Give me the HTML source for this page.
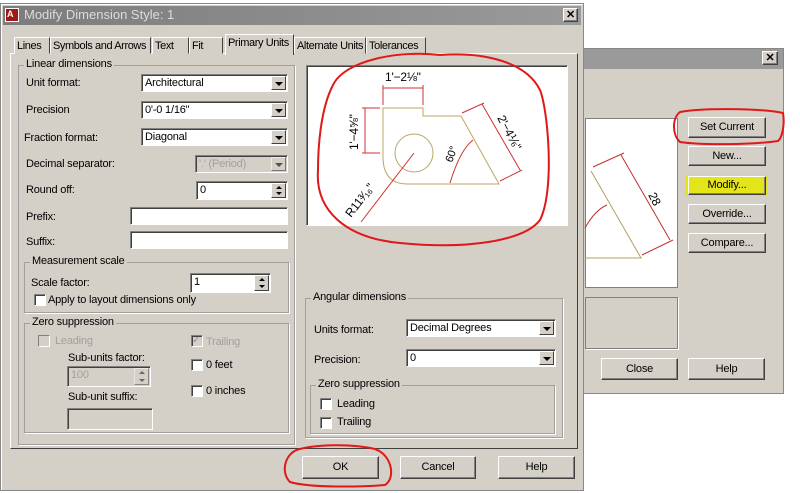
<!DOCTYPE html>
<html><head><meta charset="utf-8"><style>
*{box-sizing:border-box;margin:0;padding:0}
body{width:800px;height:493px;background:#fff;position:relative;overflow:hidden;font-family:"Liberation Sans",sans-serif;font-size:11px;color:#000;letter-spacing:-0.2px}
.a{position:absolute;white-space:nowrap}
.dlg{background:#d4d0c8;border:1px solid #888;box-shadow:inset 1px 1px 0 #fff}
.btn{position:absolute;background:#d4d0c8;border:1px solid;border-color:#fff #404040 #404040 #fff;box-shadow:inset -1px -1px 0 #808080;text-align:center;font-size:11px}
.grp{position:absolute;border:1px solid #a0a0a0;box-shadow:1px 1px 0 #fff}
.gl{position:absolute;top:-8px;left:5px;background:#d4d0c8;padding:0 2px;font-size:11px;white-space:nowrap}
.in{position:absolute;background:#fff;border:1px solid;border-color:#808080 #fff #fff #808080;box-shadow:inset 1px 1px 0 #404040;padding:2px 3px;font-size:11px;line-height:12px;white-space:nowrap}
.dd{position:absolute;right:1px;top:1px;bottom:1px;width:15px;background:#d4d0c8;border:1px solid;border-color:#fff #404040 #404040 #fff}
.dd:after{content:"";position:absolute;left:3px;top:5px;border-left:4px solid transparent;border-right:4px solid transparent;border-top:4px solid #000}
.sp{position:absolute;right:1px;top:1px;bottom:1px;width:15px;background:#d4d0c8;border:1px solid;border-color:#fff #404040 #404040 #fff}
.sp:before{content:"";position:absolute;left:4px;top:2px;border-left:3px solid transparent;border-right:3px solid transparent;border-bottom:3px solid #000}
.sp:after{content:"";position:absolute;left:4px;bottom:2px;border-left:3px solid transparent;border-right:3px solid transparent;border-top:3px solid #000}
.cb{position:absolute;width:12px;height:12px;background:#fff;border:1px solid;border-color:#808080 #fff #fff #808080;box-shadow:inset 1px 1px 0 #404040}
.tab{position:absolute;top:37px;height:17px;border:1px solid;border-color:#fff #404040 transparent #fff;padding:2px 2px;font-size:11px;background:#d4d0c8;white-space:nowrap;overflow:hidden;letter-spacing:-0.4px}
.dis{color:#a0a0a0}
</style></head><body>

<!-- back dialog -->
<div class="a dlg" style="left:575px;top:48px;width:209px;height:346px"></div>
<div class="a" style="left:576px;top:49px;width:207px;height:20px;background:#9a9a9a"></div>
<div class="btn" style="left:762px;top:51px;width:16px;height:14px;font-weight:bold;line-height:12px">✕</div>
<div class="a" style="left:585px;top:118px;width:93px;height:170px;background:#fff;border:1px solid #808080"></div>
<svg class="a" style="left:0;top:0" width="800" height="493">
<path d="M591 171 L641 258 L585 258" fill="none" stroke="#b0a060" stroke-width="1"/>
<path d="M593 167 L624 153 M642 255 L673 240 M621 155 L670 240" stroke="#c03030" fill="none"/>
<path d="M585 228 Q595 210 607 205" stroke="#c03030" fill="none"/>
<text x="648" y="195" font-size="12" transform="rotate(63 648 195)" font-family="Liberation Sans">28</text>
</svg>
<div class="btn" style="left:688px;top:117px;width:78px;height:21px;line-height:19px">Set Current</div>
<div class="btn" style="left:688px;top:146px;width:78px;height:20px;line-height:18px">New...</div>
<div class="a" style="left:685px;top:175px;width:82px;height:21px;background:#e4e41a"></div>
<div class="btn" style="left:688px;top:176px;width:78px;height:19px;line-height:17px;background:#e4e41a">Modify...</div>
<div class="btn" style="left:688px;top:204px;width:78px;height:20px;line-height:18px">Override...</div>
<div class="btn" style="left:688px;top:233px;width:78px;height:20px;line-height:18px">Compare...</div>
<div class="a" style="left:585px;top:297px;width:93px;height:52px;border:1px solid #808080;box-shadow:1px 1px 0 #fff"></div>
<div class="btn" style="left:601px;top:358px;width:77px;height:22px;line-height:20px">Close</div>
<div class="btn" style="left:688px;top:358px;width:77px;height:22px;line-height:20px">Help</div>

<!-- main dialog -->
<div class="a dlg" style="left:0;top:3px;width:584px;height:488px"></div>
<div class="a" style="left:3px;top:6px;width:578px;height:19px;background:linear-gradient(90deg,#7c7c7c,#9a9a9a)"></div>
<div class="a" style="left:5px;top:8px;width:14px;height:14px;background:#a01818;border:1px solid #fff"><div style="position:absolute;left:1px;top:0;color:#fff;font-size:9px;font-weight:bold">A</div></div>
<div class="a" style="left:24px;top:7px;color:#dcdcdc;font-size:13px;letter-spacing:0">Modify Dimension Style: 1</div>
<div class="btn" style="left:563px;top:8px;width:15px;height:14px;font-weight:bold;line-height:12px">✕</div>

<div class="a" style="left:10px;top:53px;width:568px;height:396px;border:1px solid;border-color:#fff #404040 #404040 #fff"></div>
<div class="tab" style="left:14px;width:36px">Lines</div>
<div class="tab" style="left:50px;width:101px">Symbols and Arrows</div>
<div class="tab" style="left:152px;width:37px">Text</div>
<div class="tab" style="left:189px;width:34px">Fit</div>
<div class="tab" style="left:225px;top:34px;height:21px;width:69px;border-bottom:none">Primary Units</div>
<div class="tab" style="left:294px;width:72px">Alternate Units</div>
<div class="tab" style="left:366px;width:60px">Tolerances</div>

<div class="grp" style="left:18px;top:65px;width:277px;height:380px"><span class="gl">Linear dimensions</span></div>
<div class="a" style="left:26px;top:77px">Unit format:</div>
<div class="in" style="left:141px;top:74px;width:147px;height:18px">Architectural<div class="dd"></div></div>
<div class="a" style="left:26px;top:104px">Precision</div>
<div class="in" style="left:141px;top:101px;width:147px;height:18px">0'-0 1/16"<div class="dd"></div></div>
<div class="a" style="left:24px;top:132px">Fraction format:</div>
<div class="in" style="left:141px;top:128px;width:147px;height:18px">Diagonal<div class="dd"></div></div>
<div class="a" style="left:26px;top:158px">Decimal separator:</div>
<div class="in dis" style="left:195px;top:155px;width:93px;height:18px;background:#d4d0c8">'.' (Period)<div class="dd" style="opacity:.6"></div></div>
<div class="a" style="left:26px;top:184px">Round off:</div>
<div class="in" style="left:196px;top:181px;width:92px;height:19px">0<div class="sp"></div></div>
<div class="a" style="left:26px;top:211px">Prefix:</div>
<div class="in" style="left:130px;top:207px;width:158px;height:18px"></div>
<div class="a" style="left:26px;top:236px">Suffix:</div>
<div class="in" style="left:130px;top:231px;width:158px;height:18px"></div>

<div class="grp" style="left:24px;top:262px;width:265px;height:51px"><span class="gl">Measurement scale</span></div>
<div class="a" style="left:31px;top:277px">Scale factor:</div>
<div class="in" style="left:190px;top:273px;width:81px;height:20px">1<div class="sp"></div></div>
<div class="cb" style="left:34px;top:294px"></div>
<div class="a" style="left:48px;top:294px">Apply to layout dimensions only</div>

<div class="grp" style="left:24px;top:323px;width:265px;height:110px"><span class="gl">Zero suppression</span></div>
<div class="cb" style="left:38px;top:335px;box-shadow:none;background:#d4d0c8"></div>
<div class="a dis" style="left:55px;top:335px">Leading</div>
<div class="cb" style="left:191px;top:335px;background:#d4d0c8;font-size:10px;line-height:10px;color:#909090">✓</div>
<div class="a dis" style="left:206px;top:336px">Trailing</div>
<div class="a" style="left:68px;top:352px">Sub-units factor:</div>
<div class="in dis" style="left:67px;top:366px;width:84px;height:21px;background:#d4d0c8">100<div class="sp" style="opacity:.5"></div></div>
<div class="cb" style="left:191px;top:359px"></div>
<div class="a" style="left:206px;top:359px">0 feet</div>
<div class="cb" style="left:191px;top:385px"></div>
<div class="a" style="left:206px;top:385px">0 inches</div>
<div class="a" style="left:68px;top:391px">Sub-unit suffix:</div>
<div class="in" style="left:67px;top:408px;width:86px;height:22px;background:#d4d0c8"></div>

<div class="a" style="left:306px;top:65px;width:262px;height:161px;background:#fff;border:1px solid;border-color:#808080 #fff #fff #808080;box-shadow:inset 1px 1px 0 #404040"></div>

<div class="grp" style="left:305px;top:298px;width:258px;height:140px"><span class="gl">Angular dimensions</span></div>
<div class="a" style="left:314px;top:324px">Units format:</div>
<div class="in" style="left:406px;top:319px;width:150px;height:18px">Decimal Degrees<div class="dd"></div></div>
<div class="a" style="left:314px;top:354px">Precision:</div>
<div class="in" style="left:406px;top:349px;width:150px;height:18px">0<div class="dd"></div></div>
<div class="grp" style="left:310px;top:385px;width:245px;height:49px"><span class="gl">Zero suppression</span></div>
<div class="cb" style="left:320px;top:398px"></div>
<div class="a" style="left:337px;top:398px">Leading</div>
<div class="cb" style="left:320px;top:417px"></div>
<div class="a" style="left:337px;top:416px">Trailing</div>

<div class="btn" style="left:302px;top:456px;width:77px;height:23px;line-height:21px">OK</div>
<div class="btn" style="left:400px;top:456px;width:76px;height:23px;line-height:21px">Cancel</div>
<div class="btn" style="left:498px;top:456px;width:77px;height:23px;line-height:21px">Help</div>

<svg class="a" style="left:0;top:0" width="800" height="493" font-family="Liberation Sans">
<path d="M383 108 L423 108 L423 116 L461 116 L499 184 L408 184 Q383 184 383 157 Z" fill="none" stroke="#b8a860"/>
<circle cx="414" cy="153" r="19" fill="none" stroke="#b8a860"/>
<g stroke="#d03030" fill="none">
<path d="M383 105 L383 85 M423 105 L423 85 M383 88 L423 88"/>
<path d="M380 108 L362 108 M380 153 L362 153 M365 108 L365 153"/>
<path d="M462 113 L484 103 M500 181 L522 170 M482 104 L520 170"/>
<path d="M414 153 L361 222"/>
<path d="M450 183 Q460 150 473 140"/>
</g>
<text x="385" y="81" font-size="12">1'−2⅛"</text>
<text x="358" y="150" font-size="12" transform="rotate(-90 358 150)">1'−4⅝"</text>
<text x="497" y="118" font-size="12" transform="rotate(62 497 118)">2'−4⅙"</text>
<text x="351" y="218" font-size="12" transform="rotate(-52 351 218)">R11³⁄₁₆"</text>
<text x="452" y="163" font-size="11" transform="rotate(-70 452 163)">60°</text>
<g stroke="#e01818" stroke-width="2" fill="none">
<path d="M440 55 C400 50 345 60 333 85 C320 110 318 150 318 170 C315 210 345 238 400 243 C470 250 525 240 540 220 C555 190 548 110 540 90 C525 60 480 52 440 55 Z"/>
<path d="M300 449 C285 452 280 472 290 482 C310 488 360 487 385 485 C396 478 392 455 375 449 C350 443 315 445 300 449 Z"/>
<path d="M680 112 C700 108 760 108 783 113 C785 125 782 138 778 141 C750 145 700 145 680 142 C672 135 672 118 680 112 Z"/>
</g>
</svg>
</body></html>
